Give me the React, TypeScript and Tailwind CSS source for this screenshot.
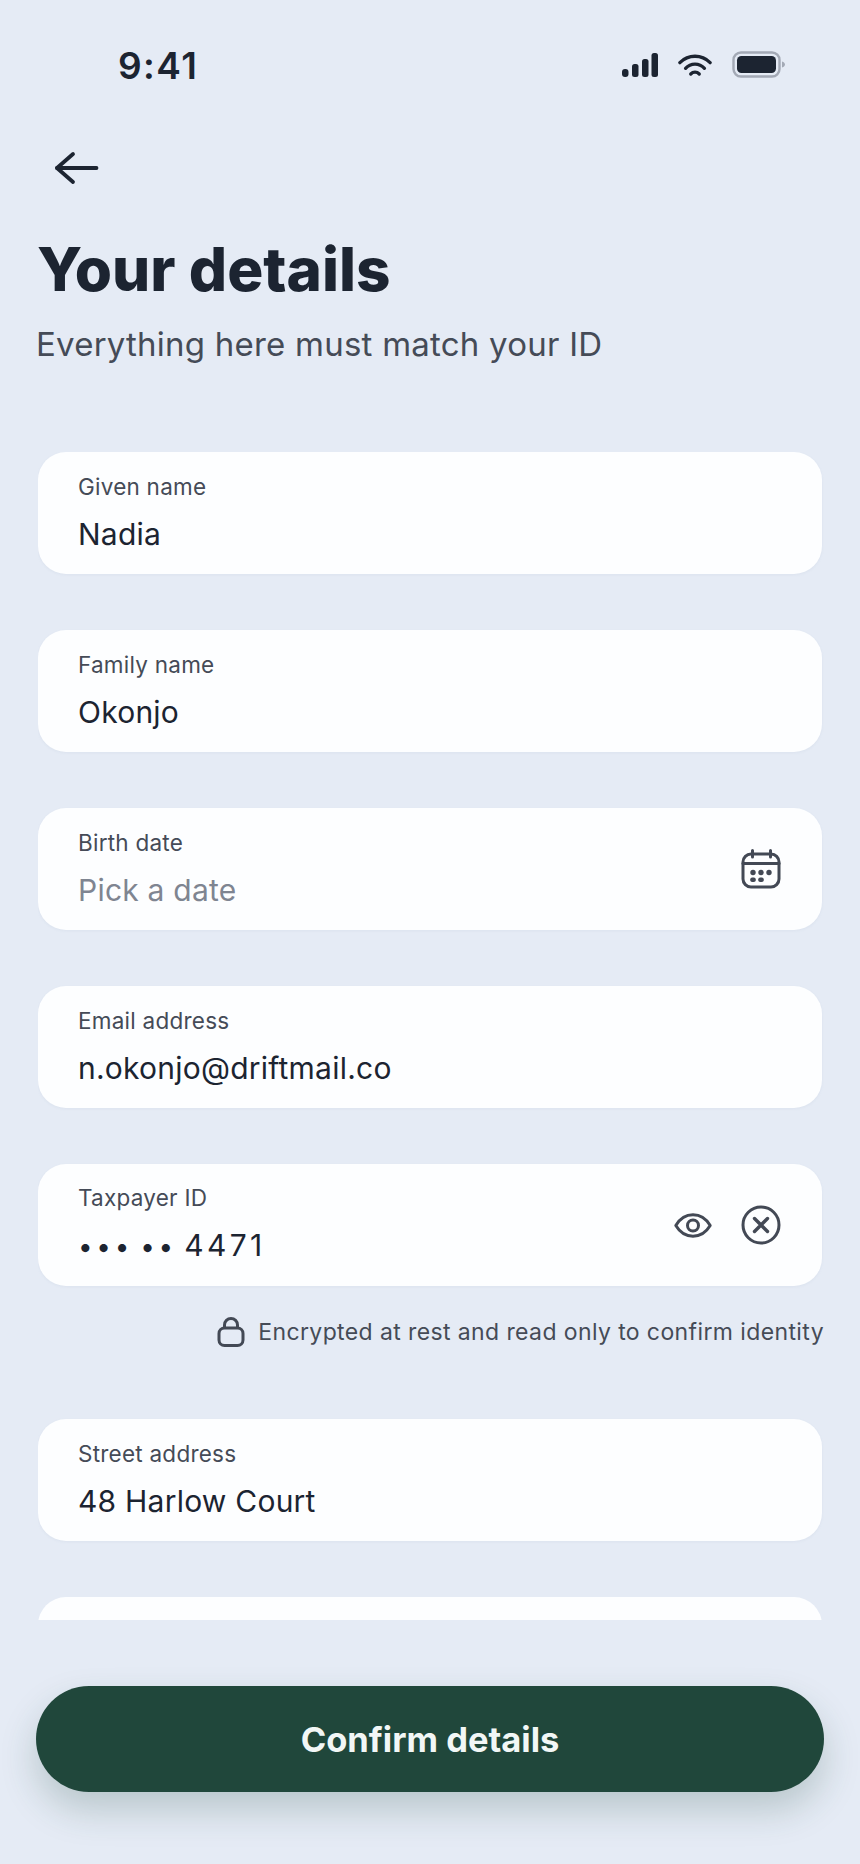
import React from "react";

const font = "font-['Inter',sans-serif]";

const SignalIcon = () => (
  <svg width="36" height="26" viewBox="0 0 36 26" fill="#1c2431">
    <rect x="0" y="17" width="6.500" height="8" rx="3" />
    <rect x="10" y="12" width="6.500" height="13" rx="2.500" />
    <rect x="20" y="7" width="6.500" height="18" rx="2.500" />
    <rect x="29.500" y="1" width="6.500" height="24" rx="2.500" />
  </svg>
);

const WifiIcon = () => (
  <svg width="34" height="24" viewBox="0 0 36 24" fill="none" stroke="#1c2431" strokeWidth="3.500" strokeLinecap="round">
    <path d="M2 9.500C11 .5 25 .5 34 9.500" />
    <path d="M8 15.500C13.500 9.500 22.500 9.500 28 15.500" />
    <path d="M13.500 21.500C16 19 20 19 22.500 21.500" />
  </svg>
);

const BatteryIcon = () => (
  <svg width="54" height="28" viewBox="0 0 54 28" fill="none">
    <rect x="1.500" y="1.500" width="46" height="24" rx="7.500" stroke="#a3a9b5" strokeWidth="2.400" />
    <rect x="5" y="5" width="39" height="17" rx="4.500" fill="#1c2431" />
    <path d="M50 10.500C52 11 53 12.500 53 13.500C53 14.500 52 16 50 16.500Z" fill="#a3a9b5" />
  </svg>
);

const BackArrow = () => (
  <svg width="46" height="34" viewBox="0 0 46 34" fill="none" stroke="#1c2431" strokeWidth="3.800" strokeLinecap="round" strokeLinejoin="round">
    <path d="M42.500 17H3" />
    <path d="M19 3L3 17L19 31" />
  </svg>
);

const CalendarIcon = () => (
  <svg width="40" height="40" viewBox="0 0 40 40" fill="none" stroke="#434955" strokeWidth="3" strokeLinecap="round">
    <rect x="2" y="5" width="36" height="33" rx="8" />
    <path d="M2 14.500H38" />
    <path d="M11.500 1.500V8M29.500 1.500V8" />
    <g fill="#434955" stroke="none">
      <circle cx="12" cy="23.500" r="2.700" />
      <circle cx="20" cy="23.500" r="2.700" />
      <circle cx="28" cy="23.500" r="2.700" />
      <rect x="9.300" y="28.500" width="5.400" height="4.500" rx="1.800" />
      <rect x="17.300" y="28.500" width="5.400" height="4.500" rx="1.800" />
    </g>
  </svg>
);

const EyeIcon = () => (
  <svg width="38" height="25" viewBox="0 0 38 25" fill="none" stroke="#434955" strokeWidth="3" strokeLinejoin="round">
    <path d="M1.800 12.500C6 5.500 11.500 1.800 19 1.800C26.500 1.800 32 5.500 36.200 12.500C32 19.500 26.500 23.200 19 23.200C11.500 23.200 6 19.500 1.800 12.500Z" />
    <circle cx="19" cy="12.500" r="5.500" />
  </svg>
);

const ClearIcon = () => (
  <svg width="40" height="40" viewBox="0 0 40 40" fill="none" stroke="#434955" strokeWidth="3" strokeLinecap="round">
    <circle cx="20" cy="20" r="18" />
    <path d="M13.500 13.500L26.500 26.500M26.500 13.500L13.500 26.500" strokeWidth="3.400" />
  </svg>
);

const LockIcon = () => (
  <svg width="28" height="30" viewBox="0 0 28 30" fill="none" stroke="#434955" strokeWidth="3">
    <rect x="2" y="11" width="24" height="17.500" rx="5.500" />
    <path d="M7.500 11V8A6.500 6.500 0 0 1 20.500 8V11" />
  </svg>
);

type FieldProps = {
  label: string;
  value: React.ReactNode;
  muted?: boolean;
  children?: React.ReactNode;
};

const Field = ({ label, value, muted, children }: FieldProps) => (
  <div className="flex h-[122px] shrink-0 items-center justify-between rounded-[28px] bg-[#fdfeff] pl-[40px] pr-[41px] shadow-[0_1px_3px_rgba(120,135,165,0.08)]">
    <div className="pb-[3px]">
      <div className="text-[22.500px] leading-[30px] tracking-[0.24px] text-[#454b57]">{label}</div>
      <div className={`mt-[14px] text-[30px] leading-[36px] tracking-[0.23px] ${muted ? "text-[#7f8591]" : "text-[#1c2431]"}`}>{value}</div>
    </div>
    {children}
  </div>
);

export default function App() {
  return (
    <div className={`${font} flex h-[1864px] w-[860px] flex-col overflow-hidden bg-[#e5ebf5]`}>
      <div className="flex h-[130px] shrink-0 items-center justify-between pl-[118px] pr-[74px]">
        <span className="text-[37px] font-semibold leading-none tracking-[1.400px] text-[#1c2431]">9:41</span>
        <div className="flex items-center gap-[20px]">
          <SignalIcon />
          <WifiIcon />
          <BatteryIcon />
        </div>
      </div>

      <div className="flex h-[76px] shrink-0 items-center pl-[54px]">
        <BackArrow />
      </div>

      <h1 className="ml-[37px] mt-[29px] text-[60.200px] font-extrabold leading-[70px] text-[#1c2431]">Your details</h1>
      <p className="ml-[36px] mt-[17px] text-[33px] leading-[44px] tracking-[0.23px] text-[#454b57]">Everything here must match your ID</p>

      <div className="ml-[38px] mr-[36px] mt-[86px] flex h-[1168px] shrink-0 flex-col overflow-hidden">
        <div className="mr-[2px] flex flex-col gap-[56px]">
          <Field label="Given name" value="Nadia" />
          <Field label="Family name" value="Okonjo" />
          <Field label="Birth date" value="Pick a date" muted>
            <CalendarIcon />
          </Field>
          <Field label="Email address" value="n.okonjo@driftmail.co" />
          <Field
            label="Taxpayer ID"
            value={
              <span className="text-[26px] tracking-[3.700px]">
                •••<span className="tracking-normal"> </span>••<span className="tracking-normal"> </span>
                <span className="text-[30px] tracking-[3.300px]">4471</span>
              </span>
            }
          >
            <div className="flex items-center gap-[29px]">
              <EyeIcon />
              <ClearIcon />
            </div>
          </Field>
        </div>
        <div className="mt-[31px] flex h-[30px] items-center justify-end gap-[13px] text-[23px] leading-none tracking-[0.39px] text-[#454b57]">
          <LockIcon />
          <span>Encrypted at rest and read only to confirm identity</span>
        </div>
        <div className="mr-[2px] mt-[72px] flex flex-col gap-[56px]">
          <Field label="Street address" value="48 Harlow Court" />
          <div className="h-[122px] shrink-0 rounded-[28px] bg-[#fdfeff]" />
        </div>
      </div>

      <button className="mx-[36px] mt-[66px] h-[106px] shrink-0 rounded-full bg-[#20473b] pt-[1px] text-[34.500px] font-bold text-[#f2f7f6] shadow-[0_18px_36px_rgba(32,71,59,0.22)]">
        Confirm details
      </button>
    </div>
  );
}
